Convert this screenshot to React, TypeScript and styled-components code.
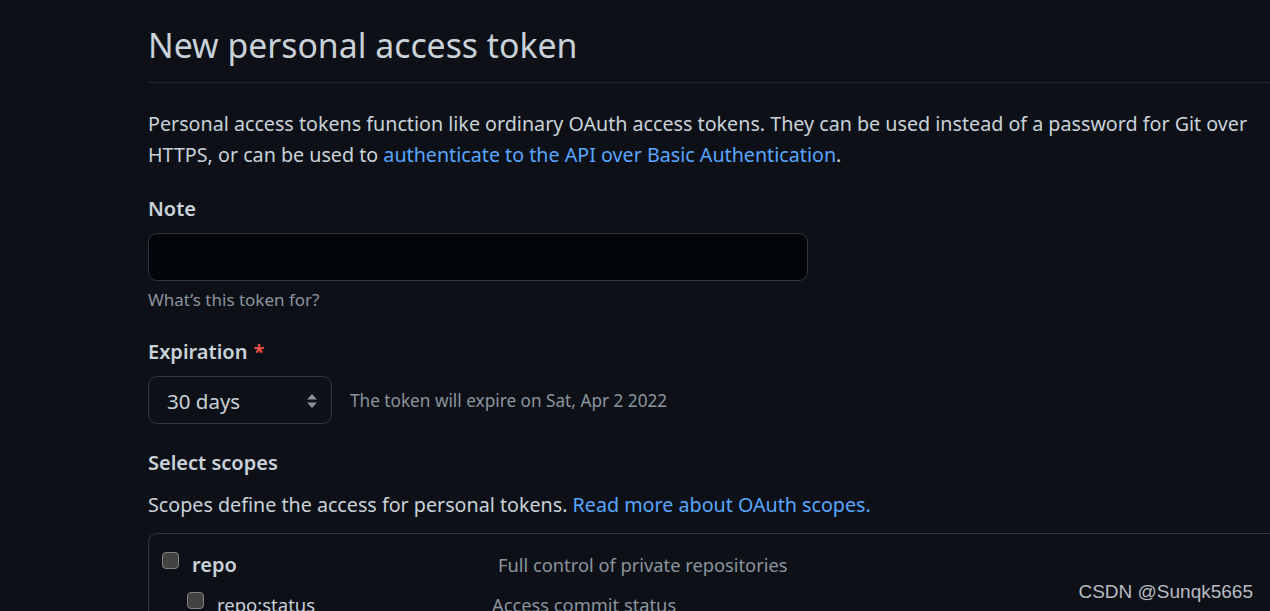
import React from 'react';
import styled, { createGlobalStyle } from 'styled-components';

const GlobalStyle = createGlobalStyle`
    html, body {
        margin: 0;
        padding: 0;
        background: #0d1117;
        overflow: hidden;
    }
    body {
        font-family: 'Noto Sans', 'Open Sans', sans-serif;
        color: #c9d1d9;
    }
`;

const Page = styled.div`
    width: 1270px;
    height: 611px;
    overflow: hidden;
    position: relative;
    padding-left: 148px;
    box-sizing: border-box;
`;

const Header = styled.div`
    padding-top: 22px;
    padding-bottom: 14px;
    border-bottom: 1px solid #21262d;
`;

const Title = styled.h1`
    margin: 0;
    font-size: 33.8px;
    font-weight: 400;
    line-height: 46px;
    color: #c9d1d9;
`;

const Lead = styled.p`
    margin: 25px 0 0;
    font-size: 19.7px;
    line-height: 31px;
    width: 1120px;
`;

const Link = styled.a`
    color: #58a6ff;
    text-decoration: none;
`;

const Group = styled.div<{ $top: number }>`
    margin-top: ${(p) => p.$top}px;
`;

const Label = styled.div`
    font-size: 20px;
    font-weight: 600;
    line-height: 28px;
`;

const Required = styled.span`
    color: #f85149;
    margin-left: 6px;
`;

const TextInput = styled.div`
    margin-top: 10px;
    width: 660px;
    height: 48px;
    box-sizing: border-box;
    background: #010409;
    border: 1px solid #30363d;
    border-radius: 9px;
`;

const Hint = styled.div`
    margin-top: 7px;
    font-size: 17px;
    line-height: 24px;
    color: #8b949e;
`;

const SelectRow = styled.div`
    margin-top: 10px;
    display: flex;
    align-items: center;
    gap: 18px;
`;

const Select = styled.div`
    width: 184px;
    height: 48px;
    box-sizing: border-box;
    border: 1px solid #30363d;
    border-radius: 9px;
    background: #0d1117;
    display: flex;
    align-items: center;
    justify-content: space-between;
    padding: 2px 12px 0 18px;
    font-size: 20.5px;
`;

const Muted = styled.span`
    font-size: 17.2px;
    color: #8b949e;
`;

const Desc = styled.p`
    margin: 12px 0 0;
    font-size: 19.7px;
    line-height: 31px;
`;

const ScopeBox = styled.div`
    margin-top: 13px;
    border: 1px solid #30363d;
    border-right: none;
    border-radius: 9px 0 0 0;
    padding: 10px 0 0 13px;
`;

const ScopeRow = styled.div<{ $name: number; $indent: number }>`
    display: grid;
    grid-template-columns: ${(p) => p.$name}px 1fr;
    align-items: center;
    padding-left: ${(p) => p.$indent}px;
    height: 40px;
`;

const ScopeName = styled.label<{ $bold?: boolean }>`
    display: flex;
    align-items: center;
    gap: 13px;
    font-size: ${(p) => (p.$bold ? 20 : 18.5)}px;
    font-weight: ${(p) => (p.$bold ? 600 : 400)};
`;

const Check = styled.span`
    width: 17px;
    height: 17px;
    box-sizing: border-box;
    border-radius: 4px;
    background: #434343;
    border: 1px solid #808080;
    display: inline-block;
    position: relative;
    top: -4px;
`;

const ScopeDesc = styled.span`
    font-size: 18.3px;
    color: #8b949e;
`;

const Watermark = styled.div`
    position: absolute;
    right: 17px;
    bottom: 8px;
    font-family: 'Liberation Sans', Arial, sans-serif;
    font-size: 19px;
    color: #b8bcc2;
`;

const Arrows = () => (
    <svg width="14" height="22" viewBox="0 0 14 22">
        <path d="M7 4 L12 9.5 H2 Z" fill="#8b949e" />
        <path d="M7 18 L12 12.5 H2 Z" fill="#8b949e" />
    </svg>
);

const App = () => {
    return (
        <Page>
            <GlobalStyle />
            <Header>
                <Title>New personal access token</Title>
            </Header>

            <Lead>
                Personal access tokens function like ordinary OAuth access tokens. They can be used instead of a password for Git over HTTPS, or can be used to{' '}
                <Link href="#">authenticate to the API over Basic Authentication</Link>.
            </Lead>

            <Group $top={25}>
                <Label>Note</Label>
                <TextInput />
                <Hint>What’s this token for?</Hint>
            </Group>

            <Group $top={26}>
                <Label>
                    Expiration<Required>*</Required>
                </Label>
                <SelectRow>
                    <Select>
                        <span>30 days</span>
                        <Arrows />
                    </Select>
                    <Muted>The token will expire on Sat, Apr 2 2022</Muted>
                </SelectRow>
            </Group>

            <Group $top={25}>
                <Label>Select scopes</Label>
                <Desc>
                    Scopes define the access for personal tokens.{' '}
                    <Link href="#">Read more about OAuth scopes.</Link>
                </Desc>
                <ScopeBox>
                    <ScopeRow $name={336} $indent={0}>
                        <ScopeName $bold>
                            <Check />
                            repo
                        </ScopeName>
                        <ScopeDesc>Full control of private repositories</ScopeDesc>
                    </ScopeRow>
                    <ScopeRow $name={305} $indent={25}>
                        <ScopeName>
                            <Check />
                            repo:status
                        </ScopeName>
                        <ScopeDesc>Access commit status</ScopeDesc>
                    </ScopeRow>
                </ScopeBox>
            </Group>

            <Watermark>CSDN @Sunqk5665</Watermark>
        </Page>
    );
};

export default App;
